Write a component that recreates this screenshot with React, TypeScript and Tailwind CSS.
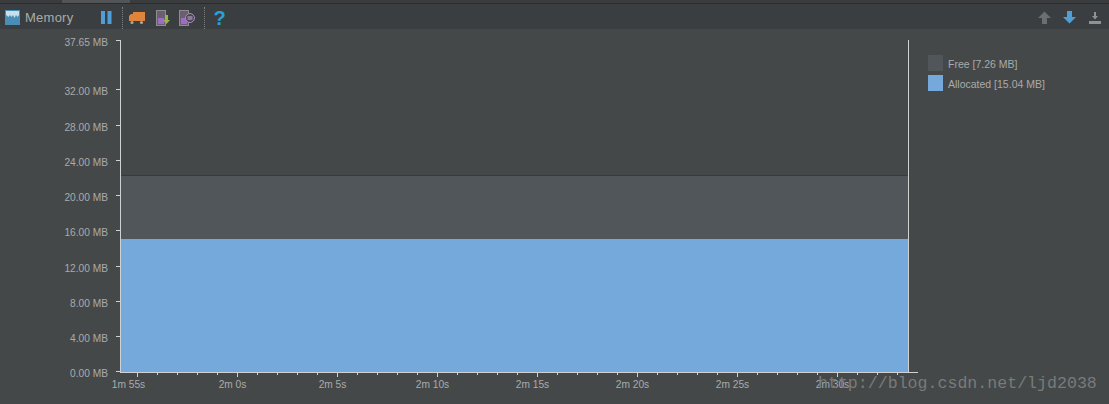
const yLabels = [
  { text: "37.65 MB", y: 42 },
  { text: "32.00 MB", y: 91 },
  { text: "28.00 MB", y: 127 },
  { text: "24.00 MB", y: 162 },
  { text: "20.00 MB", y: 197 },
  { text: "16.00 MB", y: 232 },
  { text: "12.00 MB", y: 268 },
  { text: "8.00 MB", y: 303 },
  { text: "4.00 MB", y: 338 },
  { text: "0.00 MB", y: 373 },
];

const xLabels = ["1m 55s", "2m 0s", "2m 5s", "2m 10s", "2m 15s", "2m 20s", "2m 25s", "2m 30s"];

const minorTicks = Array.from({ length: 40 }, (_, i) => 137.5 + i * 20).filter((x) => x < 915);

function MemoryIcon() {
  return (
    <svg width="15" height="15" viewBox="0 0 15 15">
      <rect width="15" height="15" fill="#4a8db5" />
      <path d="M1 1h13v4l-1.500 2-1.500-2-1.500 3-1.500-3-1.500 2-1.500-2-1.500 2L1 5z" fill="#c6e0ee" />
    </svg>
  );
}

function PauseIcon() {
  return (
    <svg width="11" height="13" viewBox="0 0 11 13">
      <rect width="4" height="13" fill="#4f9fd6" />
      <rect x="6.500" width="4" height="13" fill="#4f9fd6" />
    </svg>
  );
}

function TruckIcon() {
  return (
    <svg width="16" height="14" viewBox="0 0 16 14">
      <rect x="4" y="1" width="12" height="9" fill="#e0843c" />
      <path d="M0 5l2-2h2v7H0z" fill="#e0843c" />
      <circle cx="3" cy="11.500" r="1.600" fill="#a8a89f" />
      <circle cx="12.500" cy="11.500" r="1.600" fill="#a8a89f" />
    </svg>
  );
}

function DumpIcon() {
  return (
    <svg width="14" height="16" viewBox="0 0 14 16">
      <rect x="0.500" y="0.500" width="9" height="15" fill="#6a5f70" stroke="#8d8d8d" />
      <rect x="2" y="8" width="6" height="6" fill="#9d6cc4" />
      <path d="M9 5h3v5h2l-3.500 4L7 10h2z" fill="#9ab44c" />
    </svg>
  );
}

function AllocIcon() {
  return (
    <svg width="16" height="16" viewBox="0 0 16 16">
      <rect x="0.500" y="0.500" width="9" height="15" fill="#6a5f70" stroke="#8d8d8d" />
      <rect x="2" y="8" width="6" height="6" fill="#9d6cc4" />
      <circle cx="11" cy="8" r="4.500" fill="#4a4450" stroke="#a98cc0" />
      <path d="M8.500 7h5M8.500 9h5" stroke="#c9b3d8" />
    </svg>
  );
}

function ArrowIcon({ color, up }: { color: string; up?: boolean }) {
  return (
    <svg width="13" height="13" viewBox="0 0 13 13">
      <path d={up ? "M6.500 0.500L13 7H9v6H4V7H0z" : "M6.500 12.500L13 6H9V0H4v6H0z"} fill={color} />
    </svg>
  );
}

function DownloadIcon() {
  return (
    <svg width="12" height="13" viewBox="0 0 12 13">
      <path d="M5 1h2v4h2L6 8.500 3 5h2z" fill="#8f9192" />
      <rect y="10" width="12" height="3" fill="#8f9192" />
    </svg>
  );
}

function Separator() {
  return <div className="h-[22px] border-l border-dotted border-[#7d7f80]" />;
}

function Chart() {
  return (
    <svg width="922" height="375" viewBox="0 29 922 375" className="block shrink-0">
      <rect x="120" y="176" width="788" height="63" fill="#51565b" />
      <rect x="120" y="175" width="788" height="1" fill="#383b3c" />
      <rect x="120" y="239" width="788" height="133" fill="#76a9db" />
      <path d="M120.500 40v332.500M908.500 40v332.500M120 372.500h798" stroke="#cfd1d2" fill="none" />
      {yLabels.map((l) => (
        <g key={l.text}>
          <path d={`M116 ${l.y - 1.500}h4`} stroke="#cfd1d2" />
          <text x="108" y={l.y + 3.500} textAnchor="end" fontSize="10.200" fill="#a9abab" fontFamily="Liberation Sans, sans-serif">
            {l.text}
          </text>
        </g>
      ))}
      {minorTicks.map((x, i) => (
        <path key={x} d={`M${x} 372v${i % 5 === 0 ? 5 : 3}`} stroke="#cfd1d2" />
      ))}
      {xLabels.map((t, i) => (
        <text key={t} x={137.500 + i * 100 - (i === 0 ? 9 : 5)} y="388" textAnchor="middle" fontSize="10.200" fill="#a9abab" fontFamily="Liberation Sans, sans-serif">
          {t}
        </text>
      ))}
    </svg>
  );
}

export default function App() {
  return (
    <div className="relative flex h-[404px] w-[1109px] flex-col overflow-hidden bg-[#454849] font-['Liberation_Sans',sans-serif]">
      <div className="flex h-[4px] shrink-0 border-b border-[#2b2c2c] bg-[#3a3c3d]">
        <div className="ml-[62px] w-[68px] bg-[#525455]" />
      </div>
      <header className="flex h-[25px] shrink-0 items-center bg-[#3b3e40] pl-[5px] pr-[8px] pt-[2px]">
        <MemoryIcon />
        <span className="ml-[5px] text-[13px] tracking-[0.25px] text-[#a9abab]">Memory</span>
        <div className="ml-[28px]">
          <PauseIcon />
        </div>
        <div className="ml-[10px]">
          <Separator />
        </div>
        <div className="ml-[6px] flex items-center">
          <TruckIcon />
          <div className="ml-[11px]">
            <DumpIcon />
          </div>
          <div className="ml-[9px]">
            <AllocIcon />
          </div>
        </div>
        <div className="ml-[9px]">
          <Separator />
        </div>
        <span className="ml-[8px] text-[20px] font-bold leading-none text-[#2b9fd8]">?</span>
        <div className="ml-auto flex items-center">
          <ArrowIcon color="#6c6f70" up />
          <div className="ml-[12px]">
            <ArrowIcon color="#4f9fd6" />
          </div>
          <div className="ml-[13px]">
            <DownloadIcon />
          </div>
        </div>
      </header>
      <main className="flex flex-1">
        <Chart />
        <aside className="ml-[6px] flex flex-col gap-[4px] pt-[26px] text-[10.500px] leading-none text-[#a9abab]">
          <div className="flex h-[16px] items-center gap-[5px]">
            <span className="h-[16px] w-[15px] bg-[#51565b]" />
            <span className="pt-[2px]">Free [7.26 MB]</span>
          </div>
          <div className="flex h-[16px] items-center gap-[5px]">
            <span className="h-[16px] w-[15px] bg-[#76a9db]" />
            <span className="pt-[2px]">Allocated [15.04 MB]</span>
          </div>
        </aside>
      </main>
      <div className="absolute left-[818px] top-[372px] font-['Liberation_Mono',monospace] text-[16.600px] text-[#787b7b]">
        http://blog.csdn.net/ljd2038
      </div>
    </div>
  );
}
